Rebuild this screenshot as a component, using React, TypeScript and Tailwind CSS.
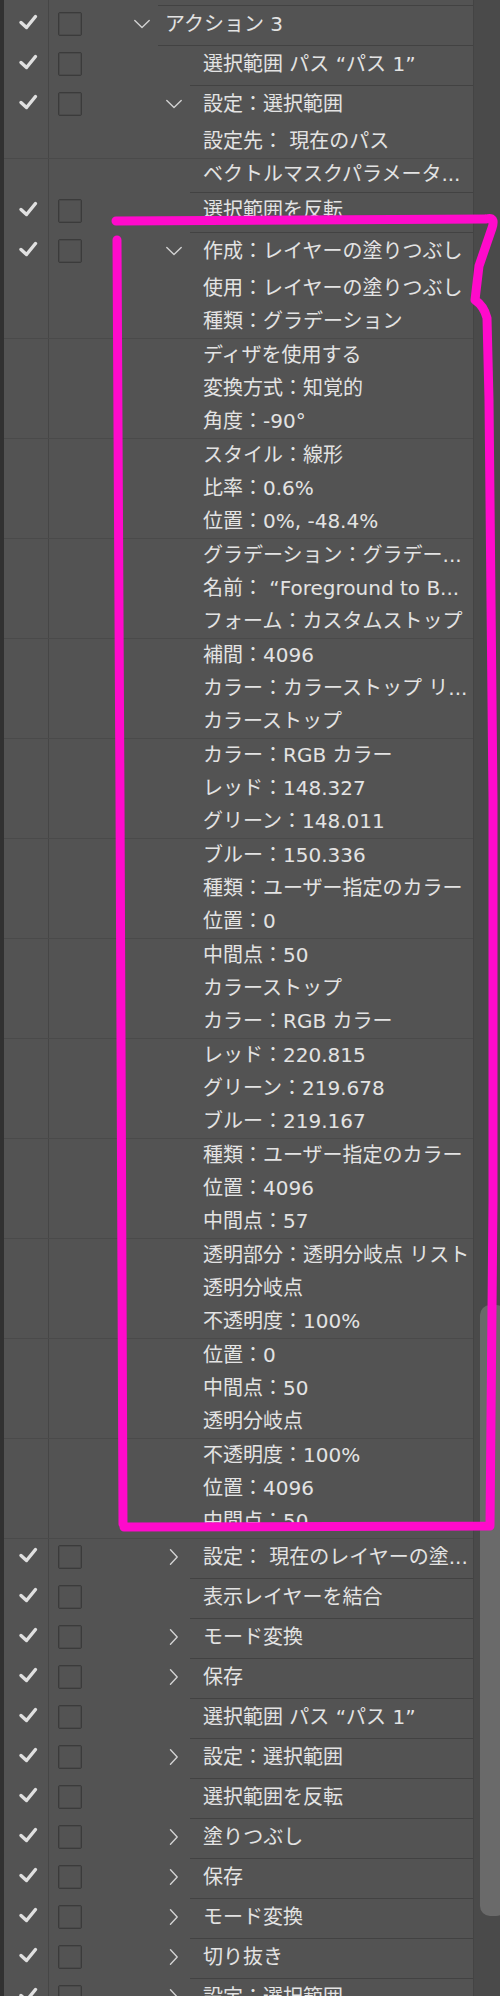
import React from 'react'
import clsx from 'clsx'

type Chev = 'down' | 'right' | null

const params: string[] = [
  '使用：レイヤーの塗りつぶし',
  '種類：グラデーション',
  'ディザを使用する',
  '変換方式：知覚的',
  '角度：-90°',
  'スタイル：線形',
  '比率：0.6%',
  '位置：0%, -48.4%',
  'グラデーション：グラデー...',
  '名前： “Foreground to B...',
  'フォーム：カスタムストップ',
  '補間：4096',
  'カラー：カラーストップ リ...',
  'カラーストップ',
  'カラー：RGB カラー',
  'レッド：148.327',
  'グリーン：148.011',
  'ブルー：150.336',
  '種類：ユーザー指定のカラー',
  '位置：0',
  '中間点：50',
  'カラーストップ',
  'カラー：RGB カラー',
  'レッド：220.815',
  'グリーン：219.678',
  'ブルー：219.167',
  '種類：ユーザー指定のカラー',
  '位置：4096',
  '中間点：57',
  '透明部分：透明分岐点 リスト',
  '透明分岐点',
  '不透明度：100%',
  '位置：0',
  '中間点：50',
  '透明分岐点',
  '不透明度：100%',
  '位置：4096',
  '中間点：50',
]

const tail: { text: string; chevron: Chev }[] = [
  { text: '設定： 現在のレイヤーの塗...', chevron: 'right' },
  { text: '表示レイヤーを結合', chevron: null },
  { text: 'モード変換', chevron: 'right' },
  { text: '保存', chevron: 'right' },
  { text: '選択範囲 パス “パス 1”', chevron: null },
  { text: '設定：選択範囲', chevron: 'right' },
  { text: '選択範囲を反転', chevron: null },
  { text: '塗りつぶし', chevron: 'right' },
  { text: '保存', chevron: 'right' },
  { text: 'モード変換', chevron: 'right' },
  { text: '切り抜き', chevron: 'right' },
  { text: '設定：選択範囲', chevron: 'right' },
]

function Check() {
  return (
    <svg width="20" height="16" viewBox="0 0 20 16" className="block">
      <path
        d="M3 8.5 L8.5 13.5 L17.5 2.5"
        fill="none"
        stroke="#e0e0e0"
        strokeWidth="3.4"
        strokeLinecap="round"
        strokeLinejoin="round"
      />
    </svg>
  )
}

function Box() {
  return <div className="ml-[9px] h-[24px] w-[24px] shrink-0 rounded-[2px] border border-[#3b3b3b] shadow-[inset_0_0_0_1px_#4a4a4a]" />
}

function Chevron({ dir }: { dir: Chev }) {
  return (
    <svg width="16" height="16" viewBox="0 0 16 16" className="mr-[8px] block shrink-0">
      {dir === 'down' ? (
        <path d="M0.8 4.5 L8 11.5 L15.2 4.5" fill="none" stroke="#d2d2d2" strokeWidth="1.4" strokeLinecap="round" strokeLinejoin="round" />
      ) : (
        <path d="M4.5 0.8 L11.2 8 L4.5 15.2" fill="none" stroke="#d2d2d2" strokeWidth="1.4" strokeLinecap="round" strokeLinejoin="round" />
      )}
    </svg>
  )
}

function Row({
  text,
  level,
  chevron,
  border = true,
}: {
  text: string
  level: 'action' | 'command'
  chevron: Chev
  border?: boolean
}) {
  return (
    <div className="flex h-[40px] shrink-0">
      <div className="flex w-[44px] items-center pb-[8px] pl-[14px]">
        <Check />
      </div>
      <div className="w-px bg-[#464646]" />
      <div className={clsx('flex items-center justify-between pb-[4px]', level === 'action' ? 'w-[109px]' : 'w-[141px]')}>
        <Box />
        {chevron && <Chevron dir={chevron} />}
      </div>
      <div
        className={clsx(
          'flex min-w-0 flex-1 items-center overflow-hidden whitespace-nowrap pb-[4px]',
          level === 'action' ? 'pl-[7px]' : 'pl-[13px]',
          border && 'border-b border-[#424242]'
        )}
      >
        {text}
      </div>
    </div>
  )
}

function Param({ text, stripe, end }: { text: string; stripe?: boolean; end?: boolean }) {
  return (
    <div className={clsx('flex h-[33.333px] shrink-0', stripe && 'border-b border-[#4a4a4a]')}>
      <div className="w-[44px]" />
      <div className="w-px bg-[#464646]" />
      <div className="w-[141px]" />
      <div
        className={clsx(
          'flex min-w-0 flex-1 items-center overflow-hidden whitespace-nowrap pb-[2px] pl-[13px]',
          end && 'border-b border-[#424242]'
        )}
      >
        {text}
      </div>
    </div>
  )
}

// hand-drawn highlight box over the list
function Annotation() {
  return (
    <svg className="pointer-events-none absolute inset-0" width="500" height="1996" viewBox="0 0 500 1996">
      <path
        d="M116 221 L300 220 L486 219 Q496 216 492 228 L479 266 L475 300 Q484 306 487 318 L489 400 L493 800 L493 1200 L490 1526 L124 1527 M117 240 L120 800 L123 1524"
        fill="none"
        stroke="#ff0acb"
        strokeWidth="9"
        strokeLinecap="round"
        strokeLinejoin="round"
      />
    </svg>
  )
}

export default function App() {
  return (
    <div className="relative flex h-[1996px] w-[500px] overflow-hidden bg-[#535353] font-['DejaVu_Sans','Noto_Sans_CJK_JP',sans-serif] text-[20px] leading-none text-[#e3e3e3]">
      <div className="w-[4px] shrink-0 bg-[#313131]" />
      <div className="flex w-[469px] shrink-0 flex-col">
        <div className="flex h-[6px] shrink-0">
          <div className="w-[44px]" />
          <div className="w-px bg-[#464646]" />
          <div className="w-[109px]" />
          <div className="flex-1 border-b border-[#424242]" />
        </div>
        <Row text="アクション 3" level="action" chevron="down" />
        <Row text="選択範囲 パス “パス 1”" level="command" chevron={null} />
        <Row text="設定：選択範囲" level="command" chevron="down" border={false} />
        <Param text="設定先： 現在のパス" stripe />
        <Param text="ベクトルマスクパラメータ..." end />
        <Row text="選択範囲を反転" level="command" chevron={null} />
        <Row text="作成：レイヤーの塗りつぶし" level="command" chevron="down" border={false} />
        {params.map((p, i) => (
          <Param key={i} text={p} stripe={i % 3 === 1} />
        ))}
        {tail.map((r, i) => (
          <Row key={i} text={r.text} level="command" chevron={r.chevron} />
        ))}
      </div>
      <div className="w-[27px] shrink-0 overflow-hidden border-l border-[#444444] bg-[#4a4a4a]">
        <div className="ml-[6px] mt-[1305px] h-[611px] w-[26px] rounded-[10px] bg-[#6a6a6a]" />
      </div>
      <Annotation />
    </div>
  )
}
